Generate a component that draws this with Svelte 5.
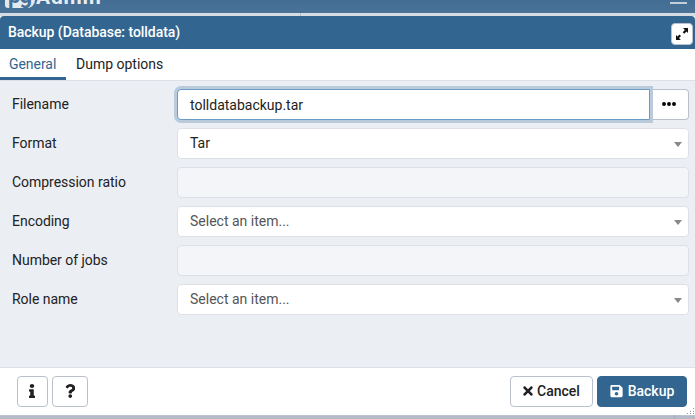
<script>
  const fields = [
    { label: 'Filename', kind: 'file', value: 'tolldatabackup.tar' },
    { label: 'Format', kind: 'select', value: 'Tar' },
    { label: 'Compression ratio', kind: 'disabled' },
    { label: 'Encoding', kind: 'select', value: 'Select an item...', empty: true },
    { label: 'Number of jobs', kind: 'disabled' },
    { label: 'Role name', kind: 'select', value: 'Select an item...', empty: true }
  ];
</script>

<div class="page">
  <div class="navbar">
    <div class="brand"><span class="pg">pg</span><span class="admin">Admin</span></div>
    <span class="burger"></span>
  </div>
  <div class="behind"><span></span></div>
  <section class="dialog">
    <header>
      <span>Backup (Database: tolldata)</span>
      <button class="expand" aria-label="Maximize">
        <svg width="22" height="22" viewBox="0 0 22 22"><path d="M12 5h5v5l-1.500-1.500-2.300 2.200-1.500-1.500 2.200-2.300zM5 17v-5l1.500 1.500 2-2 1.500 1.500-2 2L9.500 16.500V17z" fill="#111" /></svg>
      </button>
    </header>
    <nav><span class="tab active">General</span><span class="tab">Dump options</span></nav>
    <div class="form">
      {#each fields as f}
        <div class="row">
          <span class="label">{f.label}</span>
          {#if f.kind === 'file'}
            <div class="group">
              <div class="control focused">{f.value}</div>
              <button class="more" aria-label="Browse">
                <svg width="14" height="4" viewBox="0 0 14 4"><circle cx="2" cy="2" r="1.95" /><circle cx="7" cy="2" r="1.95" /><circle cx="12" cy="2" r="1.95" /></svg>
              </button>
            </div>
          {:else if f.kind === 'select'}
            <div class="control select" class:empty={f.empty}>
              <span>{f.value}</span><i class="arrow"></i>
            </div>
          {:else}
            <div class="control disabled"></div>
          {/if}
        </div>
      {/each}
    </div>
    <footer>
      <button class="btn info" aria-label="Info">
        <svg width="6" height="14" viewBox="0 0 192 512" preserveAspectRatio="none"><path d="M20 424.229h20V279.771H20c-11.046 0-20-8.954-20-20V212c0-11.046 8.954-20 20-20h112c11.046 0 20 8.954 20 20v212.229h20c11.046 0 20 8.954 20 20V492c0 11.046-8.954 20-20 20H20c-11.046 0-20-8.954-20-20v-47.771c0-11.046 8.954-20 20-20zM96 0C56.235 0 24 32.235 24 72s32.235 72 72 72 72-32.235 72-72S135.764 0 96 0z" /></svg>
      </button>
      <button class="btn help" aria-label="Help">
        <svg width="10.500" height="14" viewBox="0 0 384 512"><path d="M202.021 0C122.202 0 70.503 32.703 29.914 91.026c-7.363 10.580-5.093 25.086 5.178 32.874l43.138 32.709c10.373 7.865 25.132 6.026 33.253-4.148 25.049-31.381 43.630-49.449 82.757-49.449 30.764 0 68.816 19.799 68.816 49.631 0 22.552-18.617 34.134-48.993 51.164-35.423 19.860-82.299 44.576-82.299 106.405V320c0 13.255 10.745 24 24 24h72.471c13.255 0 24-10.745 24-24v-5.773c0-42.860 125.268-44.645 125.268-160.627C377.504 66.256 286.902 0 202.021 0zM192 373.459c-38.196 0-69.271 31.075-69.271 69.271 0 38.195 31.075 69.270 69.271 69.270s69.271-31.075 69.271-69.271-31.075-69.270-69.271-69.270z" /></svg>
      </button>
      <button class="btn cancel">
        <svg width="10" height="14" viewBox="0 0 352 512"><path d="M242.720 256l100.070-100.070c12.280-12.280 12.280-32.190 0-44.480l-22.240-22.240c-12.280-12.280-32.190-12.280-44.480 0L176 189.280 75.930 89.210c-12.280-12.280-32.190-12.280-44.480 0L9.210 111.450c-12.280 12.280-12.280 32.190 0 44.480L109.280 256 9.210 356.070c-12.280 12.280-12.280 32.190 0 44.480l22.240 22.240c12.280 12.280 32.200 12.280 44.480 0L176 322.720l100.070 100.070c12.280 12.280 32.200 12.280 44.480 0l22.240-22.240c12.280-12.280 12.280-32.190 0-44.480L242.720 256z" /></svg>
        Cancel
      </button>
      <button class="btn primary">
        <svg width="13" height="14" viewBox="0 0 448 512"><path d="M433.941 129.941l-83.882-83.882A48 48 0 0 0 316.118 32H48C21.490 32 0 53.490 0 80v352c0 26.510 21.490 48 48 48h352c26.510 0 48-21.490 48-48V163.882a48 48 0 0 0-14.059-33.941zM224 416c-35.346 0-64-28.654-64-64s28.654-64 64-64 64 28.654 64 64-28.654 64-64 64zm96-304.520V212c0 6.627-5.373 12-12 12H76c-6.627 0-12-5.373-12-12V108c0-6.627 5.373-12 12-12h228.520c3.183 0 6.235 1.264 8.485 3.515l3.480 3.480A11.996 11.996 0 0 1 320 111.480z" /></svg>
        Backup
      </button>
      <svg class="grip" width="8" height="8" viewBox="0 0 8 8"><path d="M6 1h1v1h-1zM3 4h1v1h-1zM6 4h1v1h-1zM0 6h1v1h-1zM3 6h1v1h-1zM6 6h1v1h-1z" /></svg>
    </footer>
  </section>
  <div class="shadow"><span></span></div>
</div>

<style>
  :global(body) { margin: 0; }
  .page { width: 695px; height: 419px; overflow: hidden; display: flex; flex-direction: column; font-family: Roboto, sans-serif; font-size: 14px; color: #222; background: #fff; }
  .page * { box-sizing: border-box; }
  .navbar { height: 13px; flex: none; background: linear-gradient(#426d94, #4b7397); display: flex; justify-content: space-between; align-items: flex-start; padding: 0 8px 0 5px; overflow: hidden; }
  .brand { display: flex; align-items: flex-start; color: #e8edf2; font-weight: 700; }
  .pg { width: 30px; height: 24px; margin-top: -16px; border-radius: 4px 4px 8px 3px; background: #e4e8ee; color: #456f95; font-size: 22px; line-height: 24px; padding-left: 3px; letter-spacing: -1px; }
  .admin { font-size: 21px; line-height: 20px; height: 20px; margin: -13px 0 0 1px; letter-spacing: 0.800px; }
  .burger { width: 17px; height: 2px; margin-top: 2px; background: #c1cedc; }
  .behind { height: 3px; flex: none; background: #d8dce3; padding-left: 300px; display: flex; }
  .behind span { width: 1px; background: #b3bfce; }
  .dialog { height: 399px; flex: none; display: flex; flex-direction: column; border-radius: 4px 4px 3px 3px; overflow: hidden; }
  header { height: 33px; flex: none; background: #326690; color: #fff; display: flex; justify-content: space-between; align-items: center; padding: 0 2px 0 8px; font-weight: 500; }
  header > span { margin-top: -2px; letter-spacing: -0.040px; }
  button { font: inherit; padding: 0; display: flex; align-items: center; justify-content: center; }
  .expand { width: 22px; height: 22px; border: 1px solid #bac1cd; border-radius: 4px; background: #fff; margin-top: 3px; }
  .expand svg { flex: none; }
  nav { height: 32px; flex: none; display: flex; background: #fff; border-bottom: 1px solid #dde0e6; }
  .tab { height: 31px; line-height: 30px; padding: 0 10px; }
  .tab.active { width: 66px; padding: 0 0 0 9px; color: #326690; border-bottom: 3px solid #326690; letter-spacing: -0.050px; }
  .form { height: 286px; flex: none; background: #ebeef3; padding: 8px 6px 0 12px; display: flex; flex-direction: column; gap: 8px; }
  .row { height: 31px; display: flex; }
  .label { width: 165px; flex: none; line-height: 30px; letter-spacing: -0.030px; }
  .control { flex: 1; height: 31px; border: 1px solid #dde0e6; border-radius: 4px; background: #fff; padding: 0 12px; line-height: 28px; }
  .group { flex: 1; display: flex; }
  .focused { border-color: #6b9cc8; border-radius: 4px 0 0 4px; box-shadow: 0 0 0 3px #b9cbdb; line-height: 30px; z-index: 1; }
  .more { width: 39px; border: 1px solid #bac1cd; border-left: 0; border-radius: 0 4px 4px 0; background: #fff; padding: 0 1px 1px 0; }
  .select { display: flex; justify-content: space-between; padding-right: 6px; }
  .empty { color: #555; }
  .arrow { width: 0; height: 0; border: 4px solid transparent; border-top: 5px solid #888; border-bottom: 0; margin-top: 13px; }
  .disabled { background: #f3f5f9; }
  footer { height: 48px; flex: none; border-top: 1px solid #dde0e6; background: #fff; padding: 8px 8px 0 17px; display: flex; gap: 4px; position: relative; }
  .btn { height: 31px; border: 1px solid #bac1cd; border-radius: 4px; background: #fff; font-weight: 500; color: #222; fill: #222; gap: 4px; padding-bottom: 1px; }
  .info { width: 31px; padding-right: 1px; }
  .help { width: 36px; }
  .cancel { width: 83px; margin-left: auto; }
  .primary { width: 90px; background: #326690; border-color: #326690; color: #fff; fill: #fff; gap: 5px; }
  .grip { position: absolute; right: 0; bottom: 0; fill: #999; }
  .shadow { flex: 1; background: linear-gradient(#c5cad4 0, #b3bac8 1px); display: flex; padding-left: 674px; }
  .shadow span { width: 1px; background: #a3adbd; }
</style>
